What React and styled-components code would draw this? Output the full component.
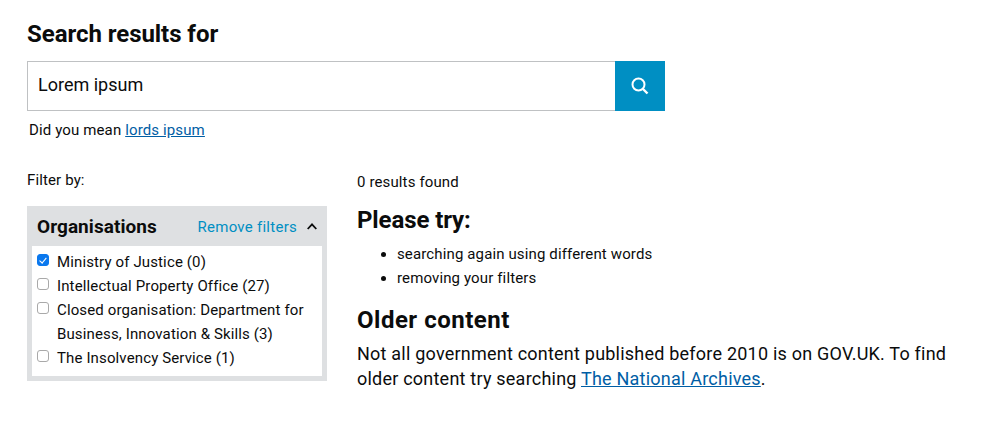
import React from "react";
import styled, { createGlobalStyle } from "styled-components";

const GlobalStyle = createGlobalStyle`
  html, body {
    margin: 0;
    background: #fff;
    color: #0b0c0c;
    font-family: Roboto, "Noto Sans", sans-serif;
  }
`;

const filters = [
  { label: "Ministry of Justice (0)", checked: true },
  { label: "Intellectual Property Office (27)" },
  { label: "Closed organisation: Department for Business, Innovation & Skills (3)" },
  { label: "The Insolvency Service (1)" },
];

const SearchIcon = () => (
  <svg width="18" height="18" viewBox="0 0 18 18" fill="none" stroke="#fff" strokeWidth="2">
    <circle cx="7.5" cy="7.5" r="6" />
    <path d="M12 12l4.5 4.5" strokeWidth="2.4" />
  </svg>
);

const Chevron = () => (
  <svg width="10" height="7" viewBox="0 0 10 7" fill="none" stroke="#0b0c0c" strokeWidth="1.8">
    <path d="M0.7 6L5 1.4L9.3 6" />
  </svg>
);

const App = () => (
  <>
    <GlobalStyle />
    <Page>
      <Title>Search results for</Title>
      <SearchBar>
        <SearchInput defaultValue="Lorem ipsum" />
        <SearchButton aria-label="Search">
          <SearchIcon />
        </SearchButton>
      </SearchBar>
      <Suggestion>
        Did you mean <TextLink href="#">lords ipsum</TextLink>
      </Suggestion>
      <Columns>
        <Sidebar>
          <FilterLabel>Filter by:</FilterLabel>
          <Panel>
            <PanelHeader>
              <PanelTitle>Organisations</PanelTitle>
              <RemoveLink>Remove filters</RemoveLink>
              <Chevron />
            </PanelHeader>
            <PanelBody>
              {filters.map((f) => (
                <FilterRow key={f.label}>
                  <FilterCheck type="checkbox" defaultChecked={f.checked} />
                  <span>{f.label}</span>
                </FilterRow>
              ))}
            </PanelBody>
          </Panel>
        </Sidebar>
        <Results>
          <ResultCount>0 results found</ResultCount>
          <Heading $tracking="-0.1px">Please try:</Heading>
          <Tips>
            <li>searching again using different words</li>
            <li>removing your filters</li>
          </Tips>
          <Heading $tracking="0.5px">Older content</Heading>
          <Body>
            Not all government content published before 2010 is on GOV.UK. To find older content try
            searching <TextLink href="#">The National Archives</TextLink>.
          </Body>
        </Results>
      </Columns>
    </Page>
  </>
);

const Page = styled.div`
  width: 992px;
  height: 434px;
  padding: 20px 27px 0;
  box-sizing: border-box;
  overflow: hidden;
`;
const Title = styled.h1`
  margin: 0 0 12px;
  font-size: 24px;
  line-height: 29px;
  font-weight: 700;
  letter-spacing: -0.05px;
`;
const SearchBar = styled.div`
  display: flex;
  width: 638px;
  height: 50px;
`;
const SearchInput = styled.input`
  flex: 1;
  min-width: 0;
  padding: 0 10px 3px;
  box-sizing: border-box;
  border: 1px solid #bfc1c3;
  border-right: none;
  border-radius: 0;
  outline: none;
  color: #0b0c0c;
  font-family: inherit;
  font-size: 18px;
`;
const SearchButton = styled.button`
  width: 50px;
  padding: 0;
  border: none;
  background: #008fc3;
  display: flex;
  align-items: center;
  justify-content: center;
`;
const Suggestion = styled.p`
  margin: 8px 0 0 2px;
  font-size: 15px;
  line-height: 22px;
  letter-spacing: 0.13px;
`;
const TextLink = styled.a`
  color: #005ea5;
  text-decoration: underline;
`;
const Columns = styled.div`
  display: flex;
  gap: 30px;
  margin-top: 28px;
`;
const Sidebar = styled.aside`
  width: 300px;
  flex: none;
`;
const FilterLabel = styled.div`
  font-size: 15px;
  line-height: 22px;
  letter-spacing: 0.13px;
  margin-bottom: 15px;
`;
const Panel = styled.div`
  background: #dee0e2;
  padding: 0 5px 5px;
`;
const PanelHeader = styled.div`
  height: 40px;
  display: flex;
  align-items: center;
  padding: 0 5px;
`;
const PanelTitle = styled.div`
  flex: 1;
  font-size: 19px;
  font-weight: 700;
  letter-spacing: 0.05px;
`;
const RemoveLink = styled.span`
  color: #008fc3;
  font-size: 15px;
  letter-spacing: 0.26px;
  margin-right: 10px;
  padding-top: 2px;
`;
const PanelBody = styled.div`
  background: #fff;
  padding: 4px 5px 6px;
`;
const FilterRow = styled.label`
  display: flex;
  font-size: 15px;
  line-height: 24px;
  letter-spacing: 0.13px;
`;
const FilterCheck = styled.input`
  appearance: none;
  position: relative;
  width: 12px;
  height: 12px;
  margin: 4px 8px 0 0;
  flex: none;
  box-sizing: border-box;
  background: #fff;
  border: 1px solid #a9a9a9;
  border-radius: 3px;

  &:checked {
    background: #0a78ee;
    border-color: #0a78ee;
  }
  &:checked::after {
    content: "";
    position: absolute;
    left: 3px;
    top: 0.5px;
    width: 2.5px;
    height: 6px;
    border: solid #fff;
    border-width: 0 1.5px 1.5px 0;
    transform: rotate(40deg);
  }
`;
const Results = styled.main`
  flex: 1;
  min-width: 0;
`;
const ResultCount = styled.div`
  font-size: 15px;
  line-height: 22px;
  letter-spacing: 0.13px;
  margin-top: 2px;
`;
const Heading = styled.h2`
  margin: 13px 0 7px;
  font-size: 24px;
  line-height: 28px;
  font-weight: 700;
  letter-spacing: ${(p) => p.$tracking};
`;
const Tips = styled.ul`
  margin: 8px 0 16px;
  padding-left: 40px;
  font-size: 15px;
  line-height: 24px;
  letter-spacing: 0.13px;
`;
const Body = styled.p`
  margin: 0;
  width: 600px;
  font-size: 18px;
  line-height: 25px;
  letter-spacing: 0.22px;
`;

export default App;
